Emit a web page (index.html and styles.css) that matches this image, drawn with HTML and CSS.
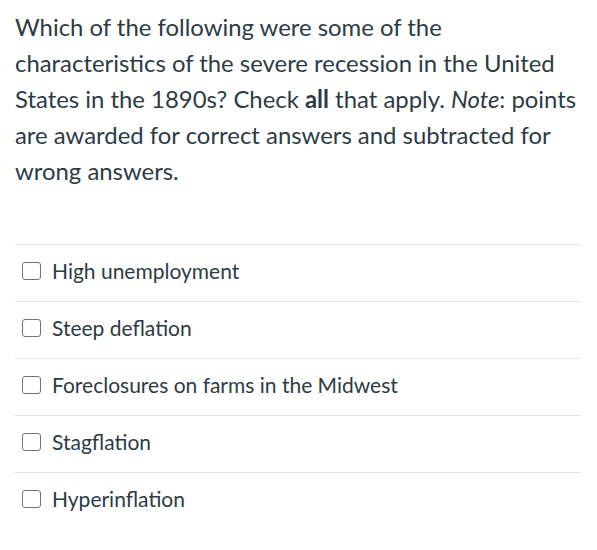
FILE: index.html
```html
<!DOCTYPE html>
<html>
<head>
<meta charset="utf-8">
<link rel="stylesheet" href="styles.css">
</head>
<body>
<div class="quiz">
  <p class="question">Which of the following were some of the characteristics of the severe recession in the United States in the 1890s? Check <strong>all</strong> that apply. <em>Note</em>: points are awarded for correct answers and subtracted for wrong answers.</p>
  <ul class="answers">
    <li class="answer"><span class="box"></span><span class="label">High unemployment</span></li>
    <li class="answer"><span class="box"></span><span class="label">Steep deflation</span></li>
    <li class="answer"><span class="box"></span><span class="label">Foreclosures on farms in the Midwest</span></li>
    <li class="answer"><span class="box"></span><span class="label">Stagflation</span></li>
    <li class="answer"><span class="box"></span><span class="label">Hyperinflation</span></li>
  </ul>
</div>
</body>
</html>
```
FILE: styles.css
```css
html, body {
  margin: 0;
  padding: 0;
  background: #ffffff;
}
.quiz {
  padding: 9px 16px 0 15px;
  font-family: Lato, "Noto Sans", sans-serif;
  color: #2d3b45;
}
.question {
  margin: 0;
  font-size: 23.9px;
  line-height: 36px;
}
.question strong {
  font-weight: 700;
}
.answers {
  list-style: none;
  margin: 55px 0 0 0;
  padding: 0;
}
.answer {
  display: flex;
  align-items: center;
  height: 52px;
  padding: 0 0 4px 7px;
  border-top: 1px solid #e2e4e6;
}
.box {
  width: 17px;
  height: 16px;
  border: 1px solid #6b7780;
  border-radius: 3px;
  margin-right: 11px;
  flex: none;
}
.label {
  font-size: 21px;
  line-height: 26px;
}
```
